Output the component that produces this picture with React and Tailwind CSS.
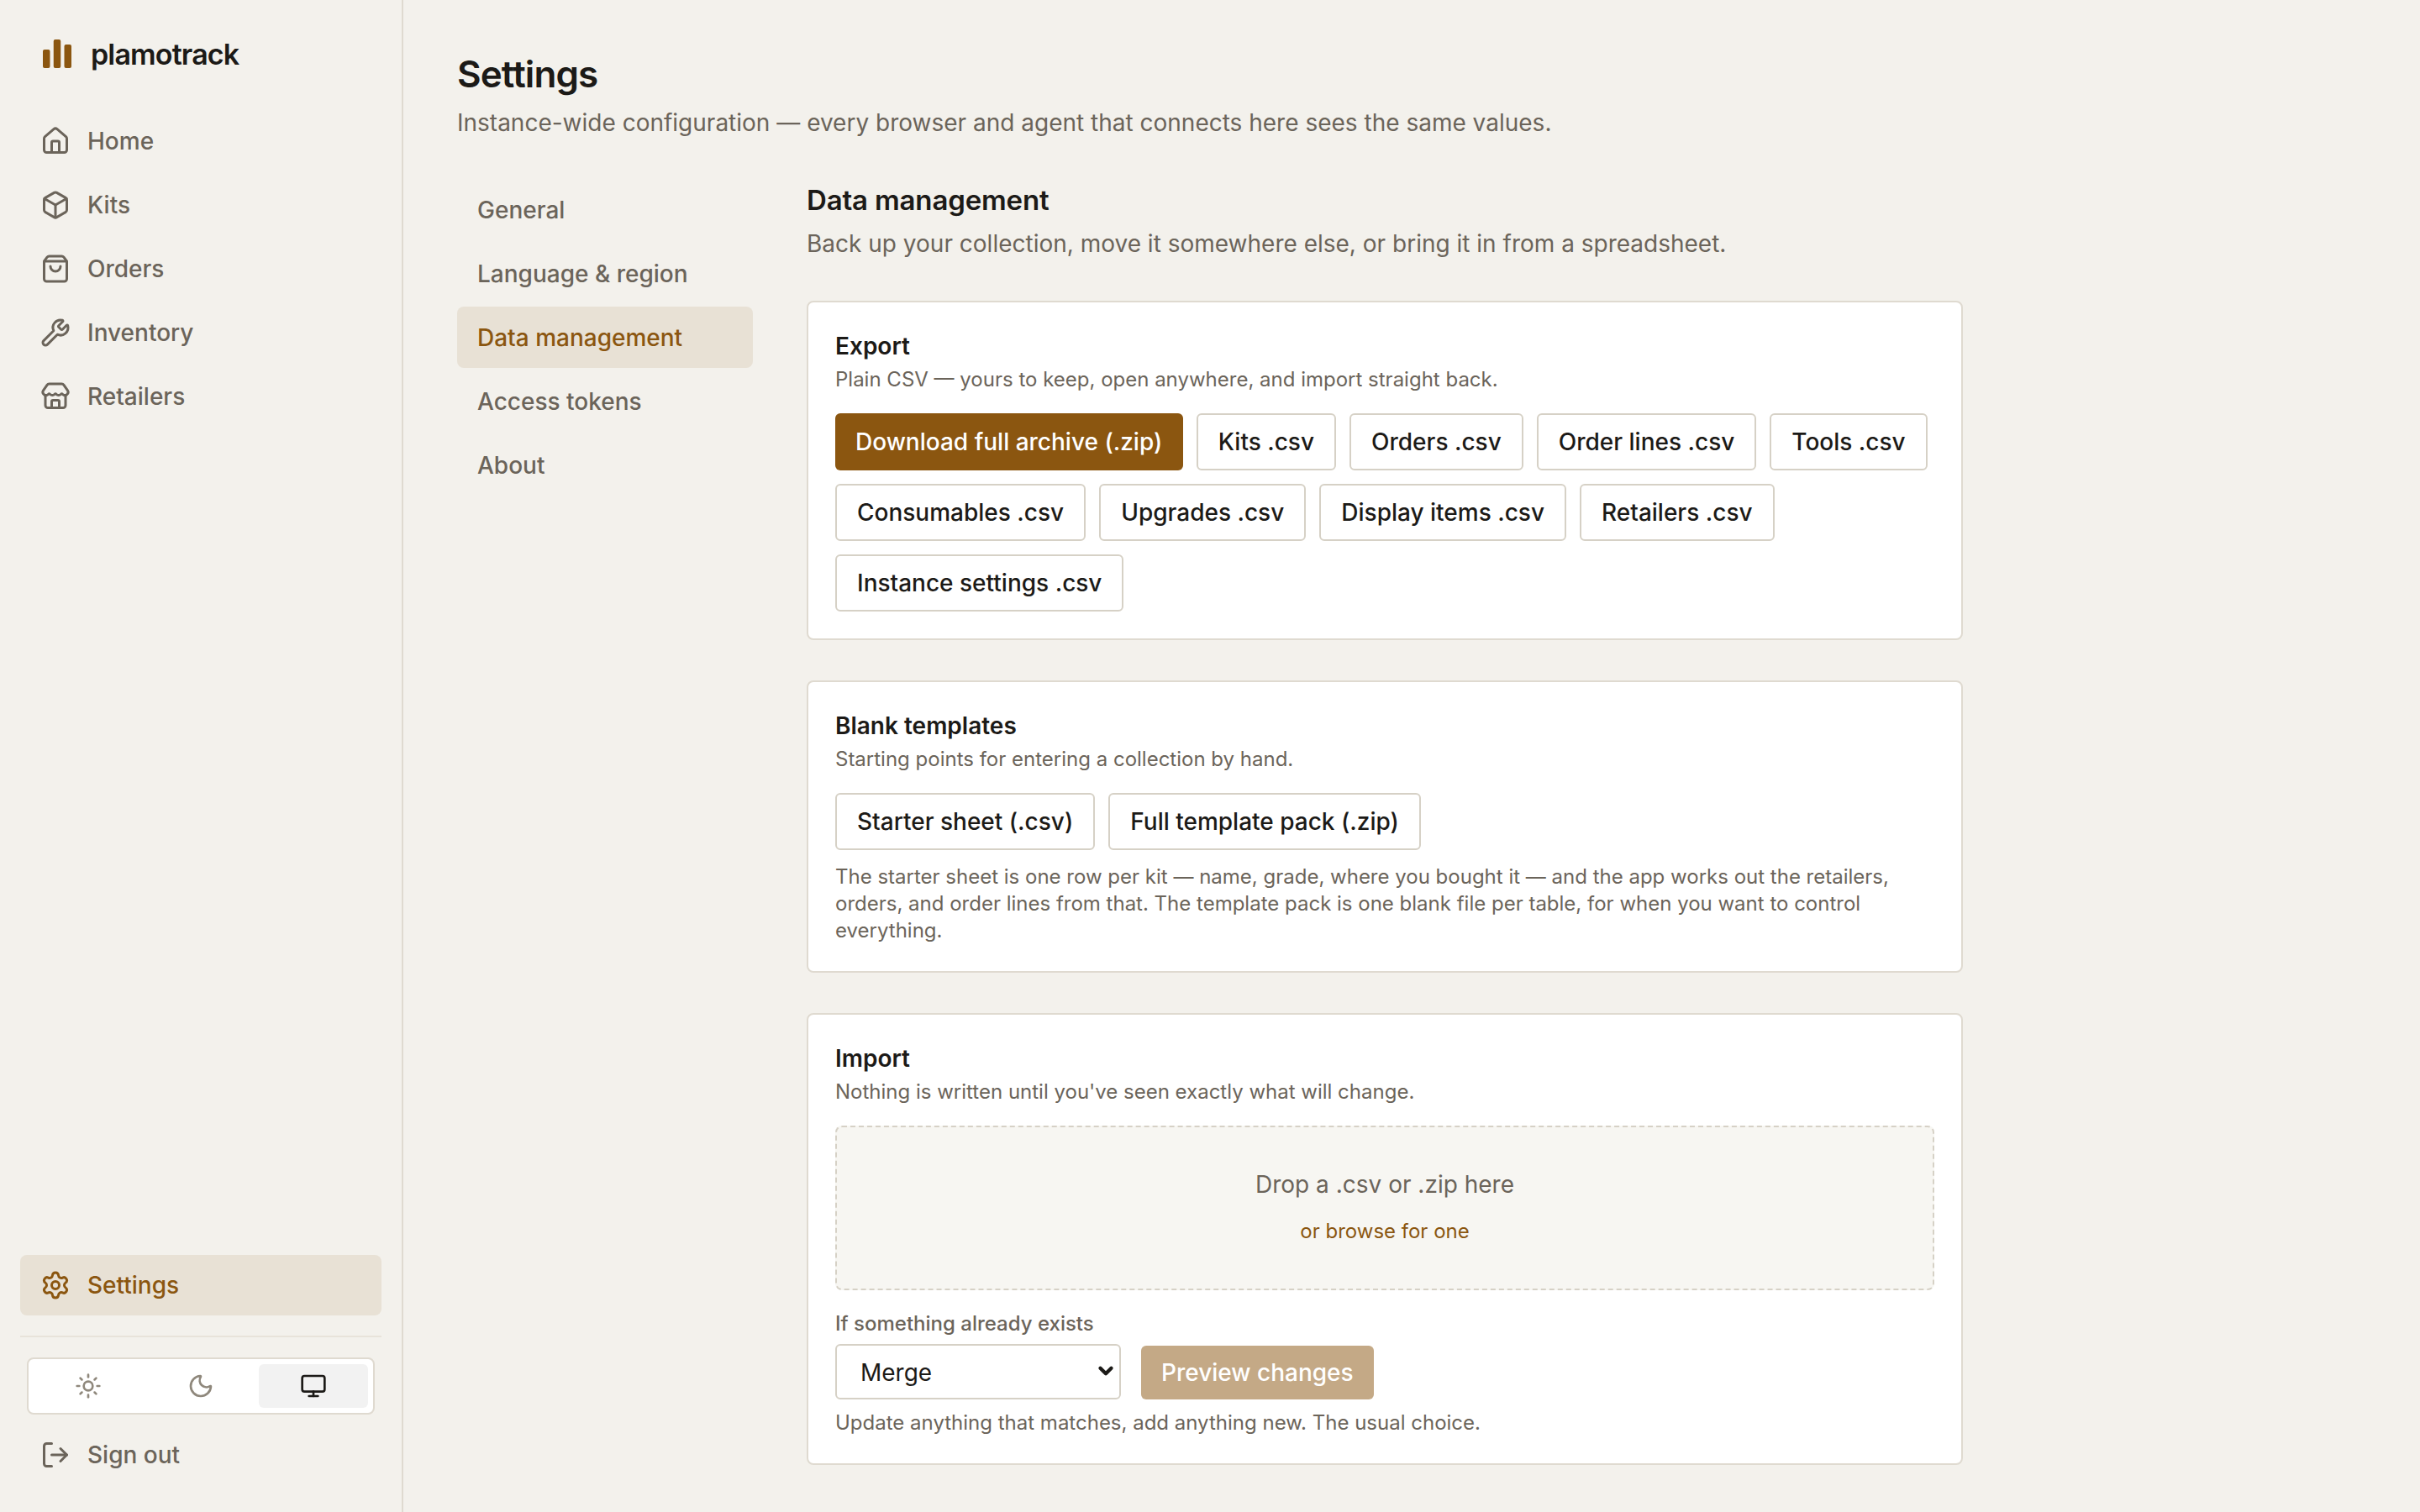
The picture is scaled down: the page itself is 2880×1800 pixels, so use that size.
import { House, Box, ShoppingBag, Wrench, Store, Settings, Sun, Moon, Monitor, LogOut, ChevronDown } from 'lucide-react';

const mainNav = [
  { label: 'Home', icon: House },
  { label: 'Kits', icon: Box },
  { label: 'Orders', icon: ShoppingBag },
  { label: 'Inventory', icon: Wrench },
  { label: 'Retailers', icon: Store },
];

const settingsNav = ['General', 'Language & region', 'Data management', 'Access tokens', 'About'];

const exports = [
  'Kits .csv', 'Orders .csv', 'Order lines .csv', 'Tools .csv', 'Consumables .csv',
  'Upgrades .csv', 'Display items .csv', 'Retailers .csv', 'Instance settings .csv',
];

function SideLink({ icon: Icon, label, active }) {
  return (
    <a className={`flex h-[72px] items-center gap-[20px] rounded-[8px] px-[24px] text-[28px] leading-[42px] font-medium ${active ? 'bg-[#e8e1d5] text-[#8b5610]' : 'text-[#6b645a]'}`}>
      <Icon size={36} strokeWidth={2} className="shrink-0" />
      {label}
    </a>
  );
}

function Button({ children }) {
  return (
    <button className="h-[68px] rounded-[6px] border-2 border-[#d6d1c6] bg-white px-[24px] text-[28px] font-medium text-[#1c1a17]">
      {children}
    </button>
  );
}

function Card({ title, sub, children }) {
  return (
    <section className="rounded-[8px] border-2 border-[#dfdad0] bg-white p-[32px]">
      <h3 className="mb-[1px] text-[28px] leading-[41px] font-semibold text-[#1c1a17]">{title}</h3>
      <p className="text-[24px] leading-[36px] text-[#6b645a]">{sub}</p>
      {children}
    </section>
  );
}

export default function App() {
  return (
    <div className="flex h-screen bg-[#f3f1ec] font-['Inter',sans-serif]">
      {/* Sidebar */}
      <aside className="flex w-[480px] shrink-0 flex-col border-r-2 border-[#dfdad0] px-[24px] pt-[40px] pb-[32px]">
        <div className="flex h-[48px] items-center gap-[23px] px-[27px]">
          <svg width="34" height="34" viewBox="0 0 34 34" fill="#8b5610" className="shrink-0">
            <rect x="0" y="12" width="8.5" height="22" rx="2" />
            <rect x="12.75" y="0" width="8.5" height="34" rx="2" />
            <rect x="25.5" y="6" width="8.5" height="28" rx="2" />
          </svg>
          <span className="text-[34px] font-semibold tracking-[-0.025em] text-[#1c1a17]">plamotrack</span>
        </div>
        <nav className="mt-[44px] flex flex-col gap-[4px]">
          {mainNav.map(n => <SideLink key={n.label} icon={n.icon} label={n.label} />)}
        </nav>
        <div className="mt-auto">
          <SideLink icon={Settings} label="Settings" active />
          <div className="my-[24px] h-[2px] bg-[#e8e3da]" />
          <div className="mx-[8px] flex gap-[4px] rounded-[8px] border-2 border-[#dfdad0] bg-white p-[6px]">
            <span className="flex h-[52px] flex-1 items-center justify-center rounded-[6px] text-[#8f887c]"><Sun size={32} /></span>
            <span className="flex h-[52px] flex-1 items-center justify-center rounded-[6px] text-[#8f887c]"><Moon size={32} /></span>
            <span className="flex h-[52px] flex-1 items-center justify-center rounded-[6px] bg-[#f2f2f2] text-[#1c1a17]"><Monitor size={32} /></span>
          </div>
          <div className="mt-[12px]">
            <SideLink icon={LogOut} label="Sign out" />
          </div>
        </div>
      </aside>

      {/* Main */}
      <main className="min-w-0 flex-1 overflow-hidden pt-[58px] pl-[64px]">
        <h1 className="text-[44px] leading-[60px] font-semibold tracking-[-0.02em] text-[#1c1a17]">Settings</h1>
        <p className="mt-[6px] text-[28px] leading-[45px] text-[#6b645a]">
          Instance-wide configuration — every browser and agent that connects here sees the same values.
        </p>

        <div className="mt-[44px] flex gap-[64px]">
          <nav className="flex w-[352px] shrink-0 flex-col gap-[3px]">
            {settingsNav.map(s => (
              <a key={s} className={`flex h-[73px] items-center rounded-[8px] px-[24px] text-[28px] font-medium ${s === 'Data management' ? 'bg-[#e8e1d5] text-[#8b5610]' : 'text-[#6b645a]'}`}>
                {s}
              </a>
            ))}
          </nav>

          <div className="w-[1376px]">
            <h2 className="text-[33px] leading-[50px] font-semibold tracking-[-0.005em] text-[#1c1a17]">Data management</h2>
            <p className="mt-[5px] text-[28px] leading-[45px] text-[#6b645a]">
              Back up your collection, move it somewhere else, or bring it in from a spreadsheet.
            </p>

            <div className="mt-[45px] flex flex-col gap-[48px]">
              <Card title="Export" sub="Plain CSV — yours to keep, open anywhere, and import straight back.">
                <div className="mt-[22px] flex flex-wrap gap-[16px]">
                  <button className="h-[68px] rounded-[6px] bg-[#8b5610] pr-[24.5px] pl-[24px] text-[28px] font-medium text-white">Download full archive (.zip)</button>
                  {exports.map(e => <Button key={e}>{e}</Button>)}
                </div>
              </Card>

              <Card title="Blank templates" sub="Starting points for entering a collection by hand.">
                <div className="mt-[22px] flex flex-wrap gap-[16px]">
                  <Button>Starter sheet (.csv)</Button>
                  <Button>Full template pack (.zip)</Button>
                </div>
                <p className="mt-[16px] text-[24px] leading-[32px] text-[#6b645a]">
                  The starter sheet is one row per kit — name, grade, where you bought it — and the app works out the retailers, orders, and order lines from that. The template pack is one blank file per table, for when you want to control everything.
                </p>
              </Card>

              <Card title="Import" sub="Nothing is written until you've seen exactly what will change.">
                <div className="mt-[22px] flex h-[196px] flex-col items-center rounded-[8px] border-2 border-dashed border-[#d6d1c6] bg-[#f7f6f2] pt-[46px]">
                  <p className="text-[28px] leading-[45px] text-[#6b645a]">Drop a .csv or .zip here</p>
                  <p className="mt-[17px] text-[24px] leading-[32px] text-[#8b5610]">or browse for one</p>
                </div>
                <label className="mt-[25px] block text-[24px] leading-[30px] font-medium text-[#6b645a]">If something already exists</label>
                <div className="mt-[9px] flex items-end gap-[24px]">
                  <div className="relative w-[340px]">
                    <select className="h-[66px] w-full appearance-none rounded-[6px] border-2 border-[#d6d1c6] bg-white px-[28px] pt-[1px] text-[28px] text-[#1c1a17]">
                      <option>Merge</option>
                    </select>
                    <ChevronDown size={26} strokeWidth={4} className="pointer-events-none absolute top-[19px] right-[5px] text-[#1c1a17]" />
                  </div>
                  <button className="h-[64px] rounded-[6px] bg-[#8b5610] px-[24px] text-[28px] font-medium text-white opacity-50">Preview changes</button>
                </div>
                <p className="mt-[12px] text-[24px] leading-[32px] text-[#6b645a]">Update anything that matches, add anything new. The usual choice.</p>
              </Card>
            </div>
          </div>
        </div>
      </main>
    </div>
  );
}
